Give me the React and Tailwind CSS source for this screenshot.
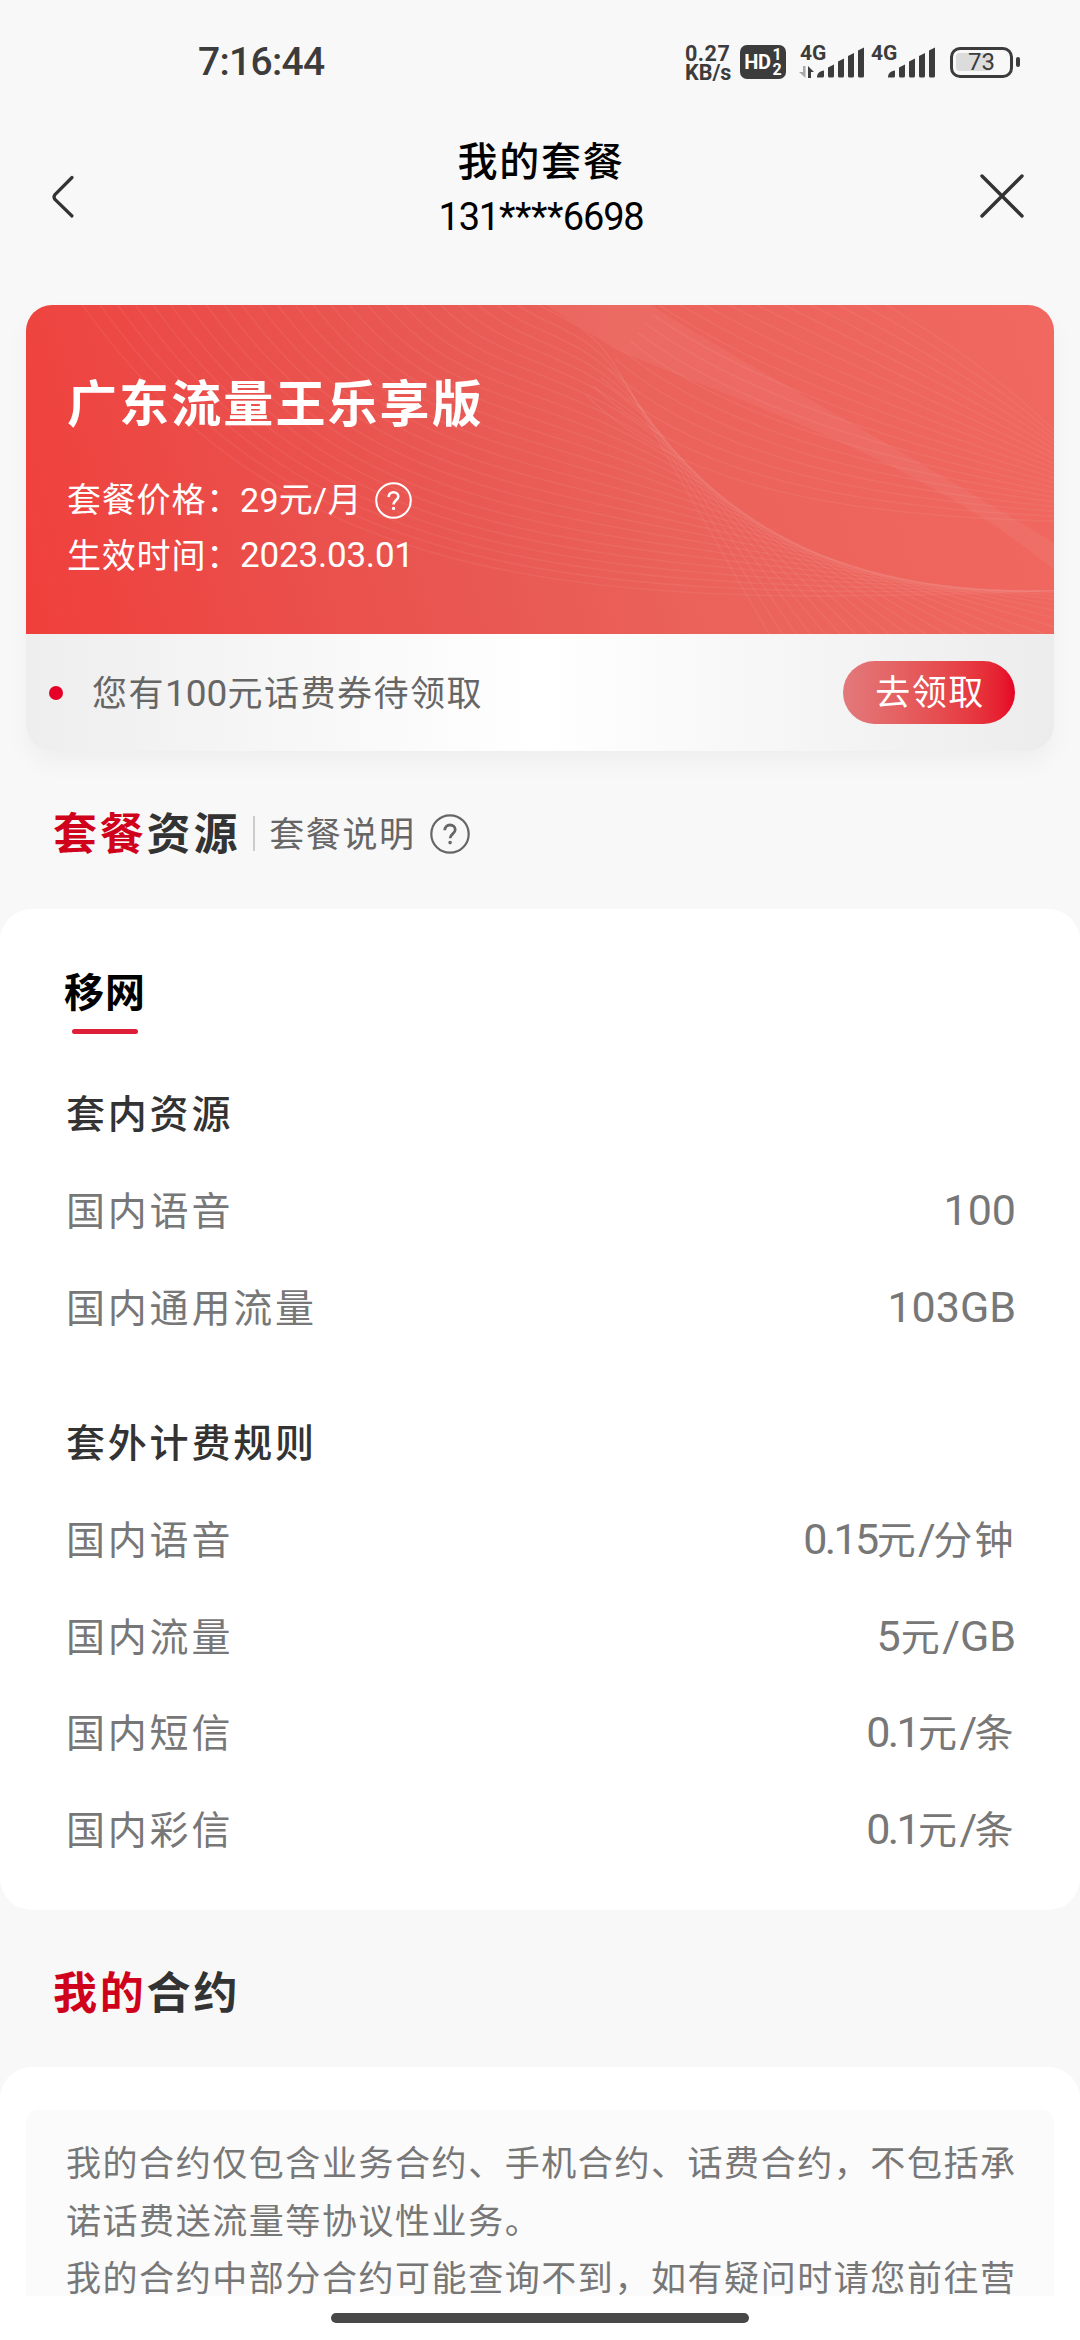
import React from "react";

const inPlan = [
  { name: "国内语音", value: "100", spacing: "tracking-normal" },
  { name: "国内通用流量", value: "103GB", spacing: "tracking-normal" },
];

const outPlan = [
  { name: "国内语音", value: "0.15元/分钟", spacing: "tracking-[-2.600px]" },
  { name: "国内流量", value: "5元/GB", spacing: "tracking-normal" },
  { name: "国内短信", value: "0.1元/条", spacing: "tracking-[-2.600px]" },
  { name: "国内彩信", value: "0.1元/条", spacing: "tracking-[-2.600px]" },
];

const lerp = (a, b, t) => a.map((v, k) => v + (b[k] - v) * t);

// cubic curves as [x0, y0, x1, y1, x2, y2, x3, y3]
const blend = (a, b, count) =>
  Array.from({ length: count }, (_, i) => {
    const p = lerp(a, b, i / (count - 1));
    return `M${p[0]} ${p[1]}C${p[2]} ${p[3]} ${p[4]} ${p[5]} ${p[6]} ${p[7]}`;
  });

const upperFan = blend(
  [560, 90, 660, 190, 850, 212, 1028, 216],
  [700, -80, 820, -30, 940, 40, 1028, 125],
  20
);

// every line of the lower fan touches this edge curve and runs on past it
const edge = [
  [560, 0],
  [645, 200],
  [790, 295],
  [1040, 285],
];

const lowerFan = Array.from({ length: 26 }, (_, i) => {
  const s = 0.12 + (0.88 * i) / 25;
  const ab = lerp(edge[0], edge[1], s);
  const bc = lerp(edge[1], edge[2], s);
  const cd = lerp(edge[2], edge[3], s);
  const from = lerp(ab, bc, s);
  const to = lerp(bc, cd, s);
  const [x, y] = lerp(from, to, s);
  const len = Math.hypot(to[0] - from[0], to[1] - from[1]);
  const dx = (to[0] - from[0]) / len;
  const dy = (to[1] - from[1]) / len;
  const start = lerp([520, -60], [30, -40], s);
  const bend = lerp([20, 50], [210, 340], s);
  const back = 40 + 420 * s;
  return `M${start[0]} ${start[1]}C${start[0] + bend[0]} ${start[1] + bend[1]} ${
    x - dx * back
  } ${y - dy * back} ${x} ${y}l${dx * 400} ${dy * 400}`;
});

const CardWaves = () => (
  <svg
    className="absolute inset-0"
    width="1028"
    height="329"
    viewBox="0 0 1028 329"
    fill="none"
  >
    <path
      d="M520 0L625 0C720 60 850 130 1028 238L1028 265C900 160 750 110 590 45Z"
      fill="#fff"
      opacity="0.05"
    />
    <g stroke="#fff" strokeOpacity="0.06" strokeWidth="1.6">
      {lowerFan.map((d) => (
        <path key={d} d={d} />
      ))}
      {upperFan.map((d) => (
        <path key={d} d={d} />
      ))}
    </g>
  </svg>
);

const HelpIcon = ({ size }) => (
  <svg width={size} height={size} viewBox="0 0 40 40" fill="none" stroke="currentColor">
    <circle cx="20" cy="20" r="18.7" strokeWidth="2.2" />
    <path
      d="M14.800 16.200c0-3.200 2.200-5.200 5.200-5.200s5.200 1.900 5.200 4.700c0 4-5.100 4.300-5.100 8.600"
      strokeWidth="2.8"
    />
    <circle cx="20.1" cy="28.6" r="1" strokeWidth="1.6" />
  </svg>
);

const SignalBars = () => (
  <svg width="48" height="32" viewBox="0 0 48 32" fill="#3c3c3c">
    <path d="M0 30.500C0 26 3 24 7 23.500V29q0 1.500-1.500 1.500z" />
    <path d="M11 20.500L17 17.500V29q0 1.500-1.500 1.500h-3Q11 30.500 11 29z" />
    <path d="M21 14.500L27 11.500V29q0 1.500-1.500 1.500h-3Q21 30.500 21 29z" />
    <path d="M31 9L37 6V29q0 1.500-1.500 1.500h-3Q31 30.500 31 29z" />
    <path d="M41 3.500L47 .5V29q0 1.500-1.500 1.500h-3Q41 30.500 41 29z" />
  </svg>
);

const StatusBar = () => (
  <div className="flex h-[124px] items-center text-[#3c3c3c]">
    <span className="ml-[198px] w-[487px] pt-[1px] text-[39px] font-medium leading-none tracking-[-0.7px]">
      7:16:44
    </span>
    <div className="w-[55px] pt-[2px] text-[21.500px] font-bold leading-[19px]">
      <div className="tracking-[0.5px]">0.27</div>
      <div>KB/s</div>
    </div>
    <div className="flex h-[34px] w-[46px] items-center justify-center gap-[2px] rounded-[7px] bg-[#3c3c3c] text-white">
      <span className="text-[20px] font-bold leading-none tracking-[-0.5px]">HD</span>
      <span className="flex flex-col text-[16px] font-bold leading-[15px]">
        <span>1</span>
        <span>2</span>
      </span>
    </div>
    <div className="relative ml-[13px] flex h-[34px] w-[71px] items-end pl-[18px]">
      <span className="absolute left-[1px] top-[-1px] text-[21px] font-bold leading-[19px]">
        4G
      </span>
      <svg className="absolute bottom-[1px] left-0" width="15" height="12" viewBox="0 0 15 12">
        <path d="M4 0h2.500v12L0 6h4z" fill="#a8a8a8" />
        <path d="M9 0l6 6h-3v6H9z" fill="#3c3c3c" />
      </svg>
      <SignalBars />
    </div>
    <div className="relative flex h-[34px] w-[80px] items-end pl-[18px]">
      <span className="absolute left-[1px] top-[-1px] text-[21px] font-bold leading-[19px]">
        4G
      </span>
      <SignalBars />
    </div>
    <div className="relative flex h-[31px] w-[63px] items-center justify-center rounded-[10px] border-[3.5px] border-[#3c3c3c]">
      <div className="absolute left-[3px] top-[3px] h-[18px] w-[36px] rounded-[4px] bg-[#dcdcdc]" />
      <span className="relative text-[24px] leading-none">73</span>
    </div>
    <div className="ml-[3px] h-[10px] w-[4px] rounded-[2px] bg-[#3c3c3c]" />
  </div>
);

const Header = () => (
  <header className="flex h-[181px] justify-between text-black">
    <svg className="ml-[50px] mt-[50px]" width="26" height="46" viewBox="0 0 26 46" fill="none">
      <path
        d="M22 3.500L5 20.500Q3 23 5 25.500L22 42"
        stroke="#333"
        strokeWidth="3.2"
        strokeLinecap="round"
      />
    </svg>
    <div className="ml-[28px] mt-[9px] flex flex-col items-center">
      <h1 className="h-[59px] text-[40px] font-medium leading-[60px] tracking-[1.700px]">
        我的套餐
      </h1>
      <div className="flex text-[38px] leading-[50px] tracking-[-1.200px]">
        131<span className="tracking-[-0.400px]">****</span>6698
      </div>
    </div>
    <svg className="mr-[54px] mt-[49px]" width="48" height="46" viewBox="0 0 48 46" fill="none">
      <path d="M4 3L44 43M44 3L4 43" stroke="#333" strokeWidth="3.4" strokeLinecap="round" />
    </svg>
  </header>
);

const PlanCard = () => (
  <section className="mx-[26px] h-[446px] overflow-hidden rounded-[26px] shadow-[0_12px_24px_rgba(0,0,0,0.04)]">
    <div className="relative h-[329px] overflow-hidden bg-[linear-gradient(75deg,#f03f3b_0%,#eb4d49_22%,#e95853_42%,#ea625a_60%,#f0685f_100%)] text-white">
      <CardWaves />
      <div className="relative pl-[41px] pt-[64px]">
        <h2 className="text-[50px] font-bold leading-[72px] tracking-[2.1px]">
          广东流量王乐享版
        </h2>
        <div className="mt-[31px] flex h-[56px] items-center whitespace-nowrap text-[34px]">
          <span className="w-[173px] tracking-[0.8px]">套餐价格：</span>
          <span className="w-[135px] tracking-[0.3px]">29元/月</span>
          <HelpIcon size={37} />
        </div>
        <div className="flex h-[56px] items-center whitespace-nowrap text-[34px]">
          <span className="w-[173px] tracking-[0.8px]">生效时间：</span>
          <span className="text-[35px] tracking-[-0.200px]">2023.03.01</span>
        </div>
      </div>
    </div>
    <div className="flex h-[117px] items-center bg-[linear-gradient(90deg,#eeeeee_0%,#ffffff_50%,#ececec_100%)] pl-[23px] pr-[39px]">
      <div className="h-[14px] w-[14px] rounded-full bg-[#e60027]" />
      <span className="ml-[29px] flex-1 pt-[3px] text-[35px] tracking-[1.5px] text-[#666]">
        您有<span className="text-[37px] tracking-normal">100</span>元话费券待领取
      </span>
      <button className="h-[63px] w-[172px] rounded-full bg-gradient-to-r from-[#e2797b] to-[#e60027] pl-[2px] pt-[3px] text-[35px] tracking-[1.5px] text-white">
        去领取
      </button>
    </div>
  </section>
);

const SectionTitle = ({ red, dark }) => (
  <h2 className="pt-[3px] text-[44px] font-bold leading-none tracking-[2.8px] text-[#333]">
    <span className="text-[#d0021b]">{red}</span>
    {dark}
  </h2>
);

// digits and latin letters are set a little larger than the Chinese units
const Value = ({ text, spacing }) => (
  <span className="tracking-[2.400px]">
    {text.split(/([0-9A-Z./]+)/).map((part, i) =>
      i % 2 ? (
        <span key={i} className={`text-[43px] leading-none ${spacing}`}>
          {part}
        </span>
      ) : (
        part
      )
    )}
  </span>
);

const Rows = ({ title, items }) => (
  <div>
    <h3 className="h-[97px] text-[39px] font-medium leading-[97px] tracking-[2.800px] text-[#333]">
      {title}
    </h3>
    {items.map((item) => (
      <div
        key={item.name}
        className="flex h-[96.600px] items-center justify-between text-[39px] text-[#777]"
      >
        <span className="tracking-[2.800px]">{item.name}</span>
        <Value text={item.value} spacing={item.spacing} />
      </div>
    ))}
  </div>
);

const App = () => {
  return (
    <div className="flex h-[2340px] w-[1080px] flex-col overflow-hidden bg-[#f8f8f8] font-[Roboto,'Noto_Sans_CJK_SC',sans-serif]">
      <StatusBar />
      <Header />
      <PlanCard />

      {/* Plan resources */}
      <div className="flex h-[158px] items-center pb-[1px] pl-[53px] pt-[8px]">
        <SectionTitle red="套餐" dark="资源" />
        <div className="ml-[13px] h-[35px] w-[2px] bg-[#ccc]" />
        <span className="ml-[14px] w-[161px] pt-[3px] text-[35px] leading-none tracking-[1.600px] text-[#666]">
          套餐说明
        </span>
        <span className="text-[#666]">
          <HelpIcon size={40} />
        </span>
      </div>

      <section className="h-[1001px] rounded-[32px] bg-white pl-[66px] pr-[64px] pt-[55px]">
        <div className="w-[77px]">
          <div className="ml-[-2px] whitespace-nowrap text-[40px] font-bold leading-[60px] tracking-[1px] text-black">
            移网
          </div>
          <div className="mx-auto mt-[5px] h-[5px] w-[66px] rounded-full bg-[#de1f39]" />
        </div>
        <div className="mt-[33px]">
          <Rows title="套内资源" items={inPlan} />
        </div>
        <div className="mt-[39px]">
          <Rows title="套外计费规则" items={outPlan} />
        </div>
      </section>

      {/* Contracts */}
      <div className="flex h-[157px] items-center pl-[53px] pt-[8px]">
        <SectionTitle red="我的" dark="合约" />
      </div>
      <section className="h-[273px] rounded-t-[32px] bg-white px-[26px] pt-[43px]">
        <div className="h-[186px] overflow-hidden rounded-t-[12px] bg-[#fbfbfb] pl-[40px] pt-[26px] text-[35px] leading-[57.500px] tracking-[1.560px] text-[#777]">
          <p className="whitespace-nowrap">我的合约仅包含业务合约、手机合约、话费合约，不包括承</p>
          <p className="whitespace-nowrap">诺话费送流量等协议性业务。</p>
          <p className="whitespace-nowrap">我的合约中部分合约可能查询不到，如有疑问时请您前往营</p>
        </div>
        <div className="mx-auto mt-[17px] h-[10px] w-[418px] rounded-full bg-[#484848]" />
      </section>
    </div>
  );
};

export default App;
